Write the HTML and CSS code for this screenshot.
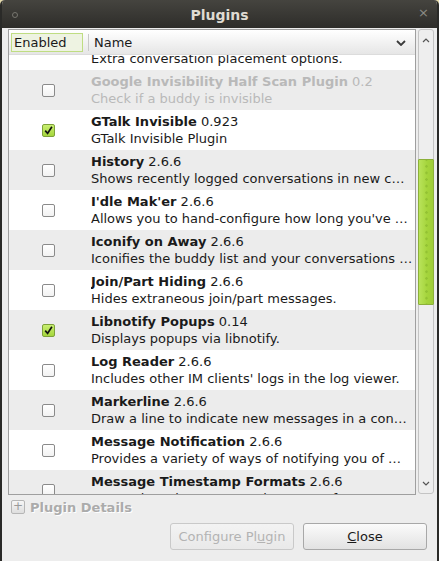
FILE: index.html
```html
<!DOCTYPE html>
<html>
<head>
<meta charset="utf-8">
<link rel="stylesheet" href="styles.css">
</head>
<body>
<div class="window">
  <div class="titlebar">
    <span class="tb-circle"></span>
    <span class="tb-title">Plugins</span>
    <span class="tb-close">×</span>
  </div>
  <div class="content">
    <div class="treearea">
      <div class="tree">
        <div class="header">
          <div class="col-enabled"><span class="hdr-box">Enabled</span></div>
          <div class="hdr-sep"></div>
          <div class="col-name">Name</div>
          <svg class="hdr-chev" width="10" height="6" viewBox="0 0 10 6"><path d="M1 1 L5 5 L9 1" fill="none" stroke="#3a3a3a" stroke-width="1.8"/></svg>
        </div>
        <div class="list">
          <div class="row white partial">
            <span class="cb"></span>
            <div class="txt"><div class="t1"><b>ExtPlacement</b> 2.6.6</div><div class="t2">Extra conversation placement options.</div></div>
          </div>
          <div class="row gray disabled">
            <span class="cb"></span>
            <div class="txt"><div class="t1"><b>Google Invisibility Half Scan Plugin</b> 0.2</div><div class="t2">Check if a buddy is invisible</div></div>
          </div>
          <div class="row white">
            <span class="cb on"><svg width="11" height="11" viewBox="0 0 11 11"><path d="M2.2 5.6 L4.6 8.4 L8.9 1.8" fill="none" stroke="#111" stroke-width="1.7"/></svg></span>
            <div class="txt"><div class="t1"><b>GTalk Invisible</b> 0.923</div><div class="t2">GTalk Invisible Plugin</div></div>
          </div>
          <div class="row gray">
            <span class="cb"></span>
            <div class="txt"><div class="t1"><b>History</b> 2.6.6</div><div class="t2">Shows recently logged conversations in new c…</div></div>
          </div>
          <div class="row white">
            <span class="cb"></span>
            <div class="txt"><div class="t1"><b>I'dle Mak'er</b> 2.6.6</div><div class="t2">Allows you to hand-configure how long you've …</div></div>
          </div>
          <div class="row gray">
            <span class="cb"></span>
            <div class="txt"><div class="t1"><b>Iconify on Away</b> 2.6.6</div><div class="t2">Iconifies the buddy list and your conversations …</div></div>
          </div>
          <div class="row white">
            <span class="cb"></span>
            <div class="txt"><div class="t1"><b>Join/Part Hiding</b> 2.6.6</div><div class="t2">Hides extraneous join/part messages.</div></div>
          </div>
          <div class="row gray">
            <span class="cb on"><svg width="11" height="11" viewBox="0 0 11 11"><path d="M2.2 5.6 L4.6 8.4 L8.9 1.8" fill="none" stroke="#111" stroke-width="1.7"/></svg></span>
            <div class="txt"><div class="t1"><b>Libnotify Popups</b> 0.14</div><div class="t2">Displays popups via libnotify.</div></div>
          </div>
          <div class="row white">
            <span class="cb"></span>
            <div class="txt"><div class="t1"><b>Log Reader</b> 2.6.6</div><div class="t2">Includes other IM clients' logs in the log viewer.</div></div>
          </div>
          <div class="row gray">
            <span class="cb"></span>
            <div class="txt"><div class="t1"><b>Markerline</b> 2.6.6</div><div class="t2">Draw a line to indicate new messages in a con…</div></div>
          </div>
          <div class="row white">
            <span class="cb"></span>
            <div class="txt"><div class="t1"><b>Message Notification</b> 2.6.6</div><div class="t2">Provides a variety of ways of notifying you of …</div></div>
          </div>
          <div class="row gray">
            <span class="cb"></span>
            <div class="txt"><div class="t1"><b>Message Timestamp Formats</b> 2.6.6</div><div class="t2">Customizes the message timestamp formats.</div></div>
          </div>
        </div>
      </div>
      <div class="scrollbar">
        <div class="sb-btn"><svg width="8" height="5" viewBox="0 0 8 5"><path d="M1 4 L4 1 L7 4" fill="none" stroke="#555" stroke-width="1.2"/></svg></div>
        <div class="sb-track"><div class="sb-thumb" style="margin-top:109px;height:144px"><div class="sb-dots"></div></div></div>
        <div class="sb-btn"><svg width="8" height="5" viewBox="0 0 8 5"><path d="M1 1 L4 4 L7 1" fill="none" stroke="#555" stroke-width="1.2"/></svg></div>
      </div>
    </div>
    <div class="expander">
      <span class="exp-box">+</span>
      <span class="exp-label">Plugin Details</span>
    </div>
    <div class="buttons">
      <button class="btn disabled">Configure Pl<u>u</u>gin</button>
      <button class="btn"><u>C</u>lose</button>
    </div>
  </div>
</div>
</body>
</html>
```

FILE: styles.css
```css
html, body {
  margin: 0;
  padding: 0;
  background: #e6dcae;
}
body {
  width: 439px;
  height: 561px;
  overflow: hidden;
  font-family: "DejaVu Sans", sans-serif;
  font-size: 13px;
  color: #1a1a1a;
}
.window {
  width: 435px;
  height: 561px;
  border-left: 2px solid #2a2a28;
  border-right: 2px solid #2a2a28;
  border-radius: 5px 5px 0 0;
  background: #ededed;
  display: flex;
  flex-direction: column;
  overflow: hidden;
}
.titlebar {
  height: 28px;
  flex: none;
  background: linear-gradient(#45443f, #2e2d2a);
  display: flex;
  align-items: center;
  position: relative;
  justify-content: center;
}
.tb-circle {
  position: absolute;
  left: 10px;
  top: 12px;
  width: 4px;
  height: 4px;
  border: 1px solid #77766f;
  border-radius: 50%;
}
.tb-title {
  font-weight: bold;
  font-size: 14px;
  color: #dfdbd2;
  margin-top: 1px;
}
.tb-close {
  position: absolute;
  right: 8px;
  top: 5px;
  font-size: 13px;
  color: #8c8b85;
}
.content {
  flex: 1;
  display: flex;
  flex-direction: column;
  padding: 1px 3px 0 6px;
}
.treearea {
  display: flex;
  height: 466px;
}
.tree {
  width: 406px;
  border: 1px solid #9f9f9f;
  background: #fff;
  display: flex;
  flex-direction: column;
  overflow: hidden;
}
.header {
  height: 25px;
  flex: none;
  background: linear-gradient(#ffffff, #e6e6e6);
  display: flex;
  align-items: center;
  border-bottom: 1px solid #dcdcdc;
  box-sizing: border-box;
}
.col-enabled {
  width: 77px;
  padding-left: 2px;
  display: flex;
}
.hdr-box {
  width: 68px;
  height: 17px;
  border: 1px solid #bfdd82;
  background: #eef3e2;
  line-height: 17px;
  padding-left: 2px;
  color: #1a1a1a;
}
.hdr-sep {
  width: 1px;
  height: 17px;
  background: #c9c9c9;
}
.col-name {
  flex: 1;
  padding-left: 5px;
}
.hdr-chev {
  margin-right: 9px;
  margin-top: 1px;
}
.list {
  flex: 1;
  overflow: hidden;
}
.row {
  height: 40px;
  display: flex;
  align-items: center;
  padding-left: 33px;
}
.row.partial {
  margin-top: -25px;
}
.row.partial .cb {
  visibility: hidden;
}
.row.white { background: #ffffff; }
.row.gray { background: #ececec; }
.cb {
  width: 11px;
  height: 11px;
  border: 1px solid #8a8a8a;
  border-radius: 2px;
  background: linear-gradient(#ffffff, #f2f2f2);
  flex: none;
  display: flex;
  align-items: center;
  justify-content: center;
}
.cb.on {
  border-color: #7ea13a;
  background: linear-gradient(#c9ef72, #a5d63c);
}
.txt {
  margin-left: 36px;
  line-height: 17px;
  white-space: nowrap;
  overflow: hidden;
  flex: 1;
}
.disabled .txt { color: #b9b9b9; }
.scrollbar {
  width: 16px;
  margin-left: 2px;
  border: 1px solid #c4c4c4;
  border-radius: 3px;
  box-sizing: border-box;
  height: 465px;
  display: flex;
  flex-direction: column;
  background: #eeeeee;
}
.sb-btn {
  height: 20px;
  flex: none;
  display: flex;
  align-items: center;
  justify-content: center;
}
.sb-track {
  flex: 1;
}
.sb-thumb {
  margin-left: -1px;
  width: 14px;
  border: 1px solid #8cb03a;
  border-radius: 1px;
  background: linear-gradient(90deg, #b9e35a, #a4d43b 60%, #9fcd38);
  display: flex;
  justify-content: center;
}
.sb-dots {
  width: 3px;
  height: 100%;
  background-image: radial-gradient(circle, #93c233 1px, transparent 1.5px);
  background-size: 3px 6.6px;
  background-position: 0 3px;
}
.expander {
  margin-top: 5px;
  display: flex;
  align-items: center;
  padding-left: 3px;
  height: 14px;
}
.exp-box {
  width: 12px;
  height: 12px;
  border: 1px solid #b6b6b6;
  border-radius: 2px;
  background: linear-gradient(#f6f6f6, #dedede);
  color: #9a9a9a;
  font-size: 12px;
  line-height: 11px;
  text-align: center;
}
.exp-label {
  margin-left: 5px;
  font-weight: bold;
  color: #ababab;
  text-shadow: 1px 1px 0 #ffffff;
}
.buttons {
  margin-top: 9px;
  display: flex;
  justify-content: flex-end;
  gap: 9px;
  padding-right: 7px;
}
.btn {
  width: 124px;
  height: 27px;
  font-family: "DejaVu Sans", sans-serif;
  font-size: 13px;
  color: #1a1a1a;
  border: 1px solid #a8a8a8;
  border-radius: 3px;
  background: linear-gradient(#fbfbfb, #e2e2e2);
  padding: 0;
}
.btn.disabled {
  color: #b3b3b3;
  border-color: #c9c9c9;
  background: linear-gradient(#f3f3f3, #e9e9e9);
}
```
